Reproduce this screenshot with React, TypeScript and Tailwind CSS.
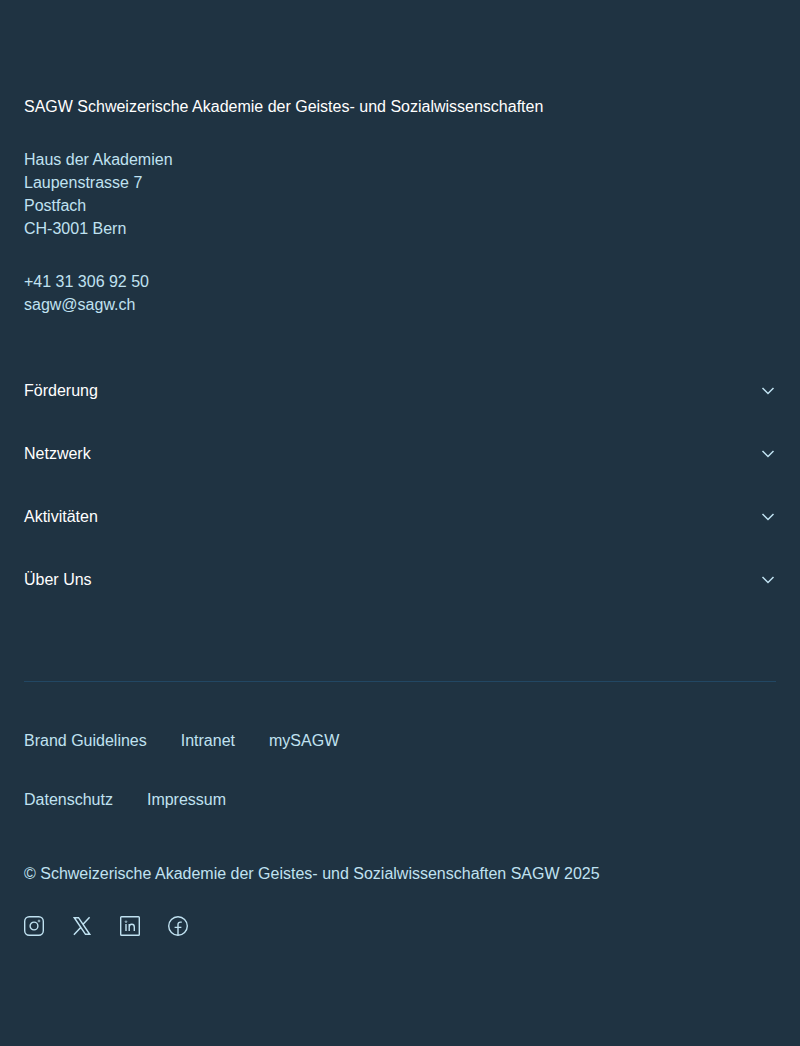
import { useState } from "react";
import type { ReactNode } from "react";

const sections = ["Förderung", "Netzwerk", "Aktivitäten", "Über Uns"];
const serviceLinks = ["Brand Guidelines", "Intranet", "mySAGW"];
const legalLinks = ["Datenschutz", "Impressum"];

function Section({ title }: { title: string }) {
  const [open, setOpen] = useState(false);
  return (
    <button
      type="button"
      aria-expanded={open}
      onClick={() => setOpen(!open)}
      className="flex w-full cursor-pointer items-center justify-between py-5 text-left text-white"
    >
      {title}
      <svg
        viewBox="0 0 16 16"
        className={open ? "size-4 rotate-180" : "size-4"}
        fill="none"
        stroke="#c0e2f1"
        strokeWidth="1.5"
        aria-hidden="true"
      >
        <path d="M2.500 5 8 10.500 13.500 5" />
      </svg>
    </button>
  );
}

function LinkRow({ links }: { links: string[] }) {
  return (
    <ul className="flex flex-wrap gap-x-[34px]">
      {links.map((label) => (
        <li key={label}>
          <a href="#" className="hover:text-white">
            {label}
          </a>
        </li>
      ))}
    </ul>
  );
}

function SocialLink({ label, children }: { label: string; children: ReactNode }) {
  return (
    <a href="#" aria-label={label} className="hover:text-white">
      <svg viewBox="0 0 20 20" className="size-5" fill="none" stroke="currentColor" strokeWidth="1.4" aria-hidden="true">
        {children}
      </svg>
    </a>
  );
}

export default function App() {
  return (
    <footer className="min-h-screen bg-[#1f3342] px-6 pt-[95px] pb-27 font-['Liberation_Sans',Arial,sans-serif] text-base leading-[23px] text-[#c0e2f1]">
      <h2 className="text-white">SAGW Schweizerische Akademie der Geistes- und Sozialwissenschaften</h2>
      <address className="mt-[30px] flex flex-col gap-[30px] not-italic">
        <p>
          Haus der Akademien
          <br />
          Laupenstrasse 7
          <br />
          Postfach
          <br />
          CH-3001 Bern
        </p>
        <p className="flex flex-col items-start">
          <a href="tel:+41313069250">+41 31 306 92 50</a>
          <a href="mailto:sagw@sagw.ch">sagw@sagw.ch</a>
        </p>
      </address>

      <nav className="mt-[43px]">
        {sections.map((title) => (
          <Section key={title} title={title} />
        ))}
      </nav>

      <hr className="mt-[70px] border-t border-[#224763]" />

      <div className="mt-[47px] flex flex-col gap-9">
        <LinkRow links={serviceLinks} />
        <LinkRow links={legalLinks} />
      </div>

      <p className="mt-[51px]">© Schweizerische Akademie der Geistes- und Sozialwissenschaften SAGW 2025</p>

      <div className="mt-[31px] flex gap-7">
        <SocialLink label="Instagram">
          <rect x="0.700" y="0.700" width="18.600" height="18.600" rx="4.500" />
          <circle cx="10" cy="10" r="3.900" />
          <circle cx="15" cy="5" r="0.900" strokeWidth="0.800" />
        </SocialLink>
        <SocialLink label="X">
          <path d="M2.300 1.700h4.200l11.200 16.600h-4.200zM17.600 1.200l-7 7.600M8.900 11.200l-7 7.600" strokeWidth="1.500" />
        </SocialLink>
        <SocialLink label="LinkedIn">
          <rect x="0.700" y="0.700" width="18.600" height="18.600" rx="0.800" />
          <path d="M6 8v7M9.200 15V8M9.200 11c0-1.700 1.100-2.700 2.600-2.700s2.500 1 2.500 2.700v4" />
          <circle cx="6" cy="5.700" r="0.800" strokeWidth="0.800" />
        </SocialLink>
        <SocialLink label="Facebook">
          <circle cx="10" cy="10" r="9.300" />
          <path d="M10 19.300V8.600c0-1.600.9-2.500 2.400-2.500h1.400M6.600 11.400h6.800" />
        </SocialLink>
      </div>
    </footer>
  );
}
